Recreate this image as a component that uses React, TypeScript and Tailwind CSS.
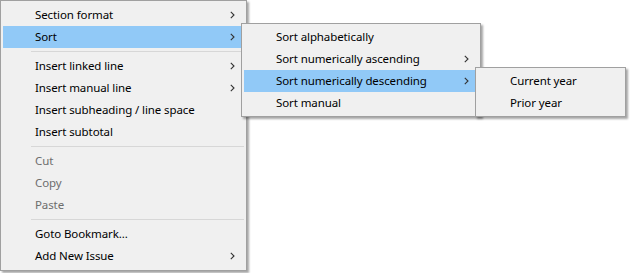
import React from "react";

const Chevron = () => (
  <svg width="5" height="8" viewBox="0 0 5 8" className="shrink-0">
    <path d="M0.8 0.8 L4 4 L0.8 7.2" fill="none" stroke="#333" strokeWidth="1.1" />
  </svg>
);

type ItemProps = {
  label: string;
  sub?: boolean;
  hot?: boolean;
  disabled?: boolean;
};

const Item = ({ label, sub, hot, disabled }: ItemProps) => (
  <div
    className={`flex h-[22px] items-center justify-between pl-[32px] pr-[9px] whitespace-nowrap ${
      hot ? "bg-[#91c9f7]" : ""
    } ${disabled ? "text-[#6d6d6d]" : "text-black"}`}
  >
    <span>{label}</span>
    {sub ? <Chevron /> : null}
  </div>
);

const Sep = () => (
  <div className="flex h-[7px] items-center pl-[28px]">
    <div className="h-px w-full bg-[#d7d7d7]" />
  </div>
);

const menuCls =
  "bg-[#f0f0f0] border border-[#a0a0a0] shadow-[2px_2px_2px_rgba(0,0,0,0.35)] px-[2px]";

export default function App() {
  return (
    <div
      className="relative h-[273px] w-[633px] overflow-hidden bg-white text-[11.5px] tracking-[-0.1px] leading-none"
      style={{ fontFamily: '"Segoe UI", "Noto Sans", "Liberation Sans", sans-serif' }}
    >
      <div className={`${menuCls} w-[247px] pt-[3px] pb-[3px]`}>
        <Item label="Section format" sub />
        <Item label="Sort" sub hot />
        <Sep />
        <Item label="Insert linked line" sub />
        <Item label="Insert manual line" sub />
        <Item label="Insert subheading / line space" />
        <Item label="Insert subtotal" />
        <Sep />
        <Item label="Cut" disabled />
        <Item label="Copy" disabled />
        <Item label="Paste" disabled />
        <Sep />
        <Item label="Goto Bookmark..." />
        <Item label="Add New Issue" sub />
      </div>

      <div className={`${menuCls} absolute left-[241px] top-[23px] w-[240px] py-[2px]`}>
        <Item label="Sort alphabetically" />
        <Item label="Sort numerically ascending" sub />
        <Item label="Sort numerically descending" sub hot />
        <Item label="Sort manual" />
      </div>

      <div className={`${menuCls} absolute left-[475px] top-[67px] w-[151px] py-[2px]`}>
        <Item label="Current year" />
        <Item label="Prior year" />
      </div>
    </div>
  );
}
